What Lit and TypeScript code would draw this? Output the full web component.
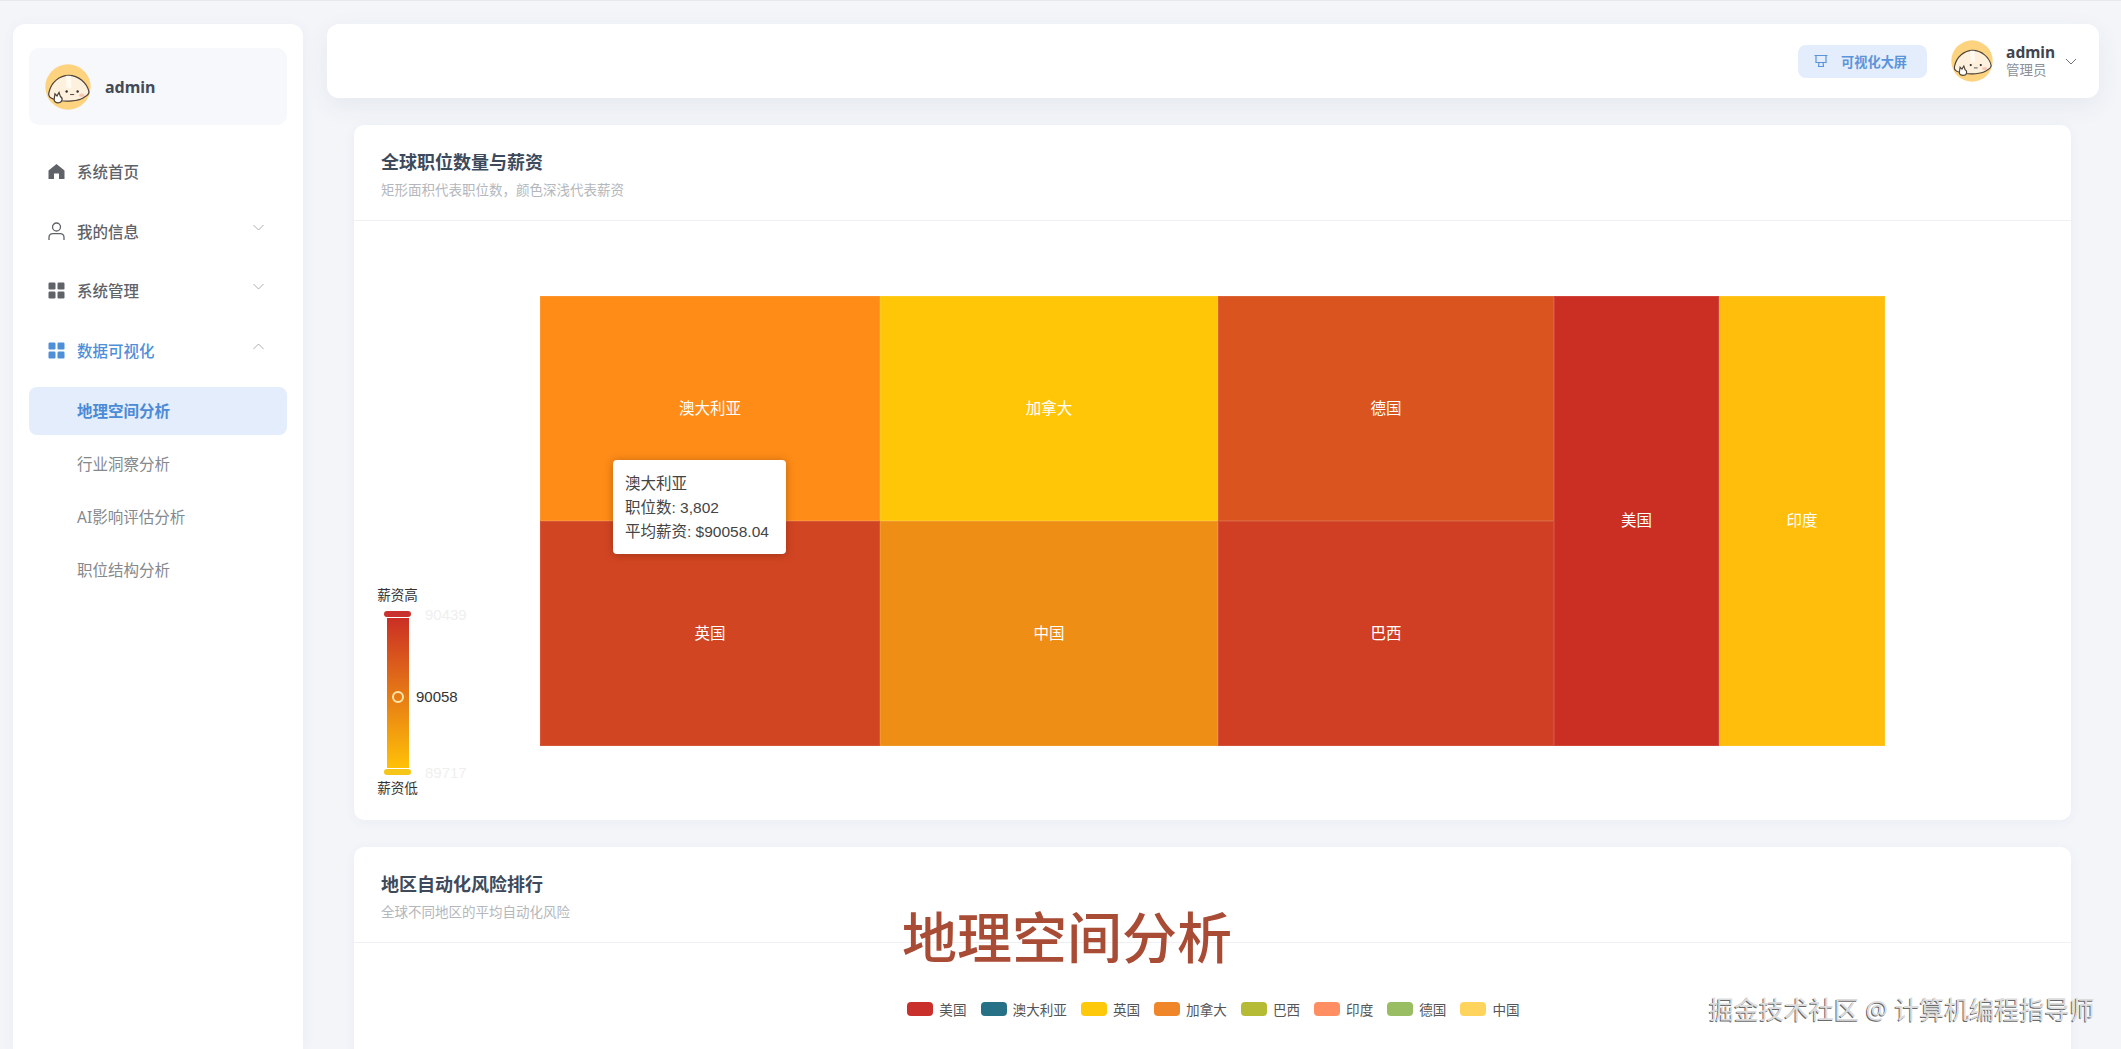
import { LitElement, css, html, svg } from 'lit';
import { customElement } from 'lit/decorators.js';

const avatar = (size: number) => html`
  <svg width=${size} height=${size} viewBox="23 23 134 134">
    ${svg`
      <circle cx="90" cy="90" r="66" fill="#fdd37f" />
      <path d="M34 108 C40 76 66 56 92 56 C120 56 146 78 151 104 C152 114 142 116 134 122 C118 132 84 132 70 130 L50 126 C42 124 32 118 34 108 Z" fill="#fdf1de" stroke="#4d4238" stroke-width="3.5" />
      <path d="M84 57 L98 57 L100 92 L86 92 Z" fill="#fffaf2" />
      <circle cx="86" cy="103" r="3.5" fill="#33302c" />
      <circle cx="118" cy="103" r="3.5" fill="#33302c" />
      <path d="M96 112 L108 112" stroke="#33302c" stroke-width="2.5" fill="none" />
      <ellipse cx="130" cy="114" rx="8" ry="5" fill="#f8c4b4" />
      <path d="M50 124 L52 110 L58 116 L64 106 L68 118 C76 122 74 136 62 136 C54 136 48 132 50 124 Z" fill="#fff" stroke="#4d4238" stroke-width="3.5" />
    `}
  </svg>
`;

const iconHome = html`<svg width="17" height="17" viewBox="0 0 17 17">
  ${svg`<path d="M8.5 1 L16.5 7.6 L16.5 16 L11 16 L11 10.5 L6 10.5 L6 16 L0.5 16 L0.5 7.6 Z" fill="currentColor" />`}
</svg>`;

const iconUser = html`<svg width="17" height="19" viewBox="0 0 17 19">
  ${svg`
    <circle cx="8.5" cy="5" r="4" fill="none" stroke="currentColor" stroke-width="1.3" />
    <path d="M1 18 L1 15.5 C1 12.8 3 11.6 5 11.6 L12 11.6 C14 11.6 16 12.8 16 15.5 L16 18" fill="none" stroke="currentColor" stroke-width="1.3" />
  `}
</svg>`;

const iconGrid = html`<svg width="17" height="17" viewBox="0 0 17 17">
  ${svg`
    <rect x="0.5" y="0.5" width="7" height="7" rx="1.2" fill="currentColor" />
    <rect x="9.5" y="0.5" width="7" height="7" rx="1.2" fill="currentColor" />
    <rect x="0.5" y="9.5" width="7" height="7" rx="1.2" fill="currentColor" />
    <rect x="9.5" y="9.5" width="7" height="7" rx="1.2" fill="currentColor" />
  `}
</svg>`;

const chevron = (up: boolean, size = 11) => html`<svg width=${size} height="7" viewBox="0 0 11 7">
  ${svg`<path d=${up ? 'M0.5 6 L5.5 1 L10.5 6' : 'M0.5 1 L5.5 6 L10.5 1'} fill="none" stroke="currentColor" stroke-width="1" />`}
</svg>`;

const iconScreen = html`<svg width="14" height="14" viewBox="0 0 14 14">
  ${svg`
    <path d="M0.5 1.5 L13.5 1.5 M2 1.5 L2 8.5 L12 8.5 L12 1.5" fill="none" stroke="currentColor" stroke-width="1.2" />
    <path d="M4 12.5 L10 12.5 M5 8.5 L4.5 12.5 M9 8.5 L9.5 12.5" fill="none" stroke="currentColor" stroke-width="1.2" />
  `}
</svg>`;

const menu = [
  { label: '系统首页', icon: iconHome },
  { label: '我的信息', icon: iconUser, arrow: 'down' },
  { label: '系统管理', icon: iconGrid, arrow: 'down' },
  { label: '数据可视化', icon: iconGrid, arrow: 'up', open: true },
];

const subMenu = ['地理空间分析', '行业洞察分析', 'AI影响评估分析', '职位结构分析'];

// treemap cells, column and row lines are in the grid template
const cells = [
  { name: '澳大利亚', color: '#ff8c17', area: '1 / 1 / 2 / 2' },
  { name: '加拿大', color: '#ffc608', area: '1 / 2 / 2 / 3' },
  { name: '德国', color: '#d9541f', area: '1 / 3 / 2 / 4' },
  { name: '美国', color: '#cb2f24', area: '1 / 4 / 3 / 5' },
  { name: '印度', color: '#ffbe0b', area: '1 / 5 / 3 / 6' },
  { name: '英国', color: '#d24522', area: '2 / 1 / 3 / 2' },
  { name: '中国', color: '#ef8e14', area: '2 / 2 / 3 / 3' },
  { name: '巴西', color: '#d03f24', area: '2 / 3 / 3 / 4' },
];

const legend = [
  { name: '美国', color: '#c9302c' },
  { name: '澳大利亚', color: '#277186' },
  { name: '英国', color: '#ffc90b' },
  { name: '加拿大', color: '#f0862a' },
  { name: '巴西', color: '#b5bb35' },
  { name: '印度', color: '#ff8f62' },
  { name: '德国', color: '#98bd62' },
  { name: '中国', color: '#ffd45c' },
];

@customElement('app-root')
export class AppRoot extends LitElement {
  static styles = css`
    :host {
      display: flex;
      position: relative;
      width: 100%;
      height: 100vh;
      overflow: hidden;
      box-sizing: border-box;
      border-top: 1px solid #e6e8ec;
      background: #f3f5f9;
      font-family: "Noto Sans", "Noto Sans CJK SC", sans-serif;
      color: #606266;
    }

    .sidebar {
      flex: none;
      width: 258px;
      margin: 23px 0 0 13px;
      padding: 24px 16px 0;
      background: #fff;
      border-radius: 12px 12px 0 0;
      box-shadow: 0 2px 14px rgba(60, 80, 120, 0.06);
    }

    .brand {
      display: flex;
      align-items: center;
      gap: 14px;
      height: 77px;
      padding-left: 16px;
      box-sizing: border-box;
      background: #f6f8fb;
      border-radius: 10px;
      font-size: 16px;
      font-weight: 700;
      color: #444b55;
    }

    .menu {
      margin-top: 17px;
    }

    .item {
      display: flex;
      align-items: center;
      height: 59.5px;
      padding-left: 19px;
      font-size: 15.5px;
      font-weight: 500;
      color: #5f6368;
    }

    .item .ico {
      display: flex;
      justify-content: center;
      width: 17px;
      margin-right: 12px;
    }

    .item .arrow {
      display: flex;
      margin-left: auto;
      margin-right: 23px;
      margin-top: -8px;
      color: #a9adb3;
    }

    .item.open {
      color: #4f8fd8;
    }

    .item.open .arrow {
      color: #a9adb3;
    }

    .sub {
      display: flex;
      flex-direction: column;
      gap: 5px;
      margin-top: 7px;
    }

    .sub div {
      height: 48px;
      line-height: 48px;
      padding-left: 48px;
      border-radius: 8px;
      font-size: 15.5px;
      color: #85888d;
    }

    .sub div.active {
      background: #e3edfb;
      color: #4b8ad6;
      font-weight: 700;
    }

    .main {
      flex: 1;
      min-width: 0;
      padding: 23px 22px 0 24px;
    }

    .topbar {
      display: flex;
      align-items: center;
      justify-content: flex-end;
      height: 74px;
      padding-right: 22px;
      box-sizing: border-box;
      background: #fff;
      border-radius: 12px;
      box-shadow: 0 8px 24px rgba(60, 70, 90, 0.07);
    }

    .screen-btn {
      display: flex;
      align-items: center;
      gap: 13px;
      width: 129px;
      height: 33px;
      padding-left: 16px;
      box-sizing: border-box;
      background: #e4edfb;
      border-radius: 8px;
      font-size: 13.2px;
      font-weight: 700;
      color: #5b94da;
      margin-right: 24px;
    }

    .user {
      display: flex;
      align-items: center;
    }

    .user .who {
      display: flex;
      flex-direction: column;
      margin: 0 10px 0 13px;
    }

    .user .name {
      font-size: 15.5px;
      line-height: 18px;
      font-weight: 700;
      color: #3f454e;
    }

    .user .role {
      font-size: 13.5px;
      line-height: 18px;
      color: #8d9096;
    }

    .user .arrow {
      display: flex;
      color: #70747a;
    }

    .content {
      display: flex;
      flex-direction: column;
      gap: 27px;
      padding: 27px 28px 0 27px;
    }

    .card {
      flex: none;
      background: #fff;
      border-radius: 10px;
      box-shadow: 0 2px 12px rgba(60, 80, 120, 0.05);
    }

    .card-head {
      height: 96px;
      padding: 24px 27px 0;
      box-sizing: border-box;
      border-bottom: 1px solid #eef0f3;
    }

    .card-title {
      font-size: 18px;
      line-height: 26px;
      font-weight: 700;
      color: #3d4a5c;
    }

    .card-sub {
      margin-top: 6px;
      font-size: 13.5px;
      line-height: 18px;
      color: #b4b7bc;
    }

    .treemap-body {
      display: flex;
      position: relative;
      height: 599px;
      padding: 75px 0 0 23px;
      box-sizing: border-box;
    }

    .vmap {
      flex: none;
      position: relative;
      width: 163px;
      margin-top: 291px;
      font-family: "Liberation Sans", "Noto Sans CJK SC", sans-serif;
      font-size: 13.5px;
      color: #333;
    }

    .vmap-label {
      line-height: 18px;
      width: 41px;
      text-align: center;
    }

    .vmap-end {
      display: flex;
      align-items: center;
      height: 6px;
      padding-left: 7px;
      gap: 14px;
      font-size: 15px;
      color: #efefef;
    }

    .vmap-end i {
      flex: none;
      width: 27px;
      height: 6px;
      border-radius: 3px;
    }

    .vmap-bar {
      width: 22px;
      height: 150px;
      margin: 1px 0 1px 10px;
      background: linear-gradient(#cb2f24, #ffc107);
    }

    .vmap-dot {
      position: absolute;
      left: 15px;
      top: 104px;
      width: 12px;
      height: 12px;
      box-sizing: border-box;
      border: 2px solid #ffe6a8;
      border-radius: 50%;
    }

    .vmap-value {
      position: absolute;
      left: 39px;
      top: 100px;
      font-size: 15px;
      line-height: 20px;
      color: #333;
    }

    .vmap .top {
      margin-bottom: 6px;
    }

    .vmap .bottom {
      margin-top: 5px;
    }

    .treemap {
      display: grid;
      grid-template-columns: 340px 338px 336px 165px 166px;
      grid-template-rows: 225px 225px;
      width: 1345px;
      height: 450px;
    }

    .cell {
      display: flex;
      align-items: center;
      justify-content: center;
      box-sizing: border-box;
      padding-bottom: 4px;
      border: 1px solid rgba(255, 255, 255, 0.1);
      font-family: "Liberation Sans", "Noto Sans CJK SC", sans-serif;
      font-size: 15.5px;
      color: #fff;
    }

    .tooltip {
      position: absolute;
      left: 259px;
      top: 239px;
      width: 173px;
      height: 94px;
      padding: 12px 12px 0;
      box-sizing: border-box;
      background: #fff;
      border-radius: 4px;
      box-shadow: 0 1px 8px rgba(60, 30, 0, 0.35);
      font-family: "Liberation Sans", "Noto Sans CJK SC", sans-serif;
      font-size: 15.5px;
      line-height: 24px;
      color: #444;
      white-space: nowrap;
    }

    .legend-body {
      display: flex;
      justify-content: center;
      gap: 14px;
      height: 200px;
      padding: 59px 0 0 2px;
      box-sizing: border-box;
      font-family: "Liberation Sans", "Noto Sans CJK SC", sans-serif;
      font-size: 13.6px;
      color: #555;
    }

    .legend-item {
      display: flex;
      align-items: center;
      gap: 6px;
      height: 14px;
    }

    .legend-item i {
      width: 26px;
      height: 14px;
      border-radius: 4px;
    }

    .caption {
      position: absolute;
      left: 902px;
      top: 898px;
      font-size: 55px;
      line-height: 76px;
      font-weight: 500;
      color: #a94c35;
      white-space: nowrap;
    }

    .watermark {
      position: absolute;
      left: 1709px;
      top: 990px;
      font-size: 25px;
      line-height: 36px;
      color: #dcdcdc;
      text-shadow: -1px 1px 0 #6a6a6a;
      white-space: pre;
    }
  `;

  render() {
    return html`
      <aside class="sidebar">
        <div class="brand">${avatar(46)}<span>admin</span></div>
        <nav class="menu">
          ${menu.map(
            (m) => html`
              <div class="item ${m.open ? 'open' : ''}">
                <span class="ico">${m.icon}</span>
                <span>${m.label}</span>
                ${m.arrow ? html`<span class="arrow">${chevron(m.arrow === 'up')}</span>` : ''}
              </div>
            `,
          )}
          <div class="sub">
            ${subMenu.map((s, i) => html`<div class=${i === 0 ? 'active' : ''}>${s}</div>`)}
          </div>
        </nav>
      </aside>

      <div class="main">
        <header class="topbar">
          <div class="screen-btn">${iconScreen}<span>可视化大屏</span></div>
          <div class="user">
            ${avatar(42)}
            <div class="who">
              <span class="name">admin</span>
              <span class="role">管理员</span>
            </div>
            <span class="arrow">${chevron(false, 12)}</span>
          </div>
        </header>

        <div class="content">
          <section class="card">
            <div class="card-head">
              <div class="card-title">全球职位数量与薪资</div>
              <div class="card-sub">矩形面积代表职位数，颜色深浅代表薪资</div>
            </div>
            <div class="treemap-body">
              <div class="vmap">
                <div class="vmap-label top">薪资高</div>
                <div class="vmap-end"><i style="background:#c8322f"></i><span>90439</span></div>
                <div class="vmap-bar"></div>
                <div class="vmap-end"><i style="background:#f5c518"></i><span>89717</span></div>
                <div class="vmap-label bottom">薪资低</div>
                <div class="vmap-dot"></div>
                <div class="vmap-value">90058</div>
              </div>
              <div class="treemap">
                ${cells.map(
                  (c) => html`<div class="cell" style="background:${c.color};grid-area:${c.area}">${c.name}</div>`,
                )}
              </div>
              <div class="tooltip">
                <div>澳大利亚</div>
                <div>职位数: 3,802</div>
                <div>平均薪资: $90058.04</div>
              </div>
            </div>
          </section>

          <section class="card">
            <div class="card-head">
              <div class="card-title">地区自动化风险排行</div>
              <div class="card-sub">全球不同地区的平均自动化风险</div>
            </div>
            <div class="legend-body">
              ${legend.map(
                (l) => html`<div class="legend-item"><i style="background:${l.color}"></i><span>${l.name}</span></div>`,
              )}
            </div>
          </section>
        </div>
      </div>

      <div class="caption">地理空间分析</div>
      <div class="watermark">掘金技术社区 @ 计算机编程指导师</div>
    `;
  }
}
